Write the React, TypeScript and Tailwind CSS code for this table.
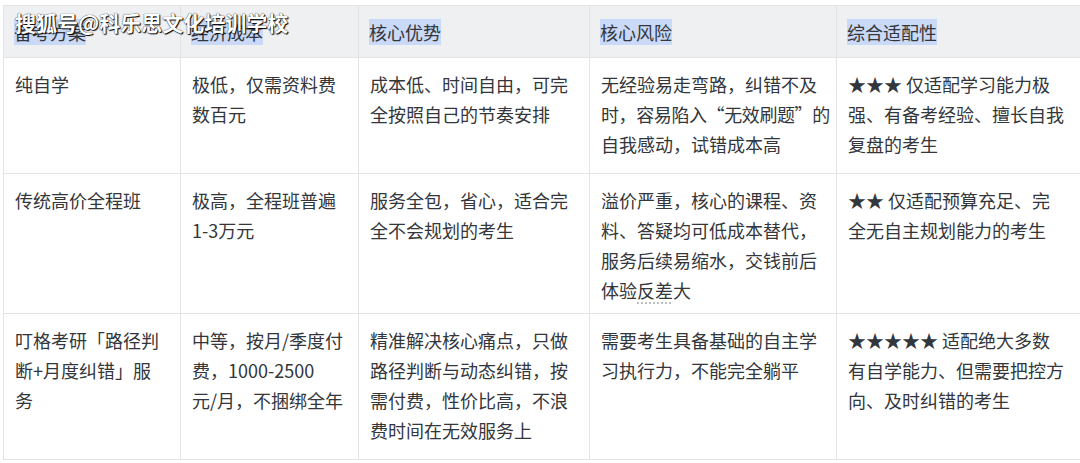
import React from "react"

type Cell = React.ReactNode[]

const headers = ["备考方案", "经济成本", "核心优势", "核心风险", "综合适配性"]

const rows: Cell[][] = [
  [
    ["纯自学"],
    ["极低，仅需资料费", "数百元"],
    ["成本低、时间自由，可完", "全按照自己的节奏安排"],
    ["无经验易走弯路，纠错不及", <span className="tracking-[-0.4px]">时，容易陷入“无效刷题”的</span>, "自我感动，试错成本高"],
    ["★★★ 仅适配学习能力极", "强、有备考经验、擅长自我", "复盘的考生"],
  ],
  [
    ["传统高价全程班"],
    ["极高，全程班普遍", "1-3万元"],
    ["服务全包，省心，适合完", "全不会规划的考生"],
    [
      "溢价严重，核心的课程、资",
      "料、答疑均可低成本替代，",
      "服务后续易缩水，交钱前后",
      <>
        体验
        <span className="underline decoration-dotted decoration-[#b5b8bd] underline-offset-[5px]">反差</span>
        大
      </>,
    ],
    ["★★ 仅适配预算充足、完", "全无自主规划能力的考生"],
  ],
  [
    ["叮格考研「路径判", "断+月度纠错」服", "务"],
    ["中等，按月/季度付", "费，1000-2500", "元/月，不捆绑全年"],
    ["精准解决核心痛点，只做", "路径判断与动态纠错，按", "需付费，性价比高，不浪", "费时间在无效服务上"],
    ["需要考生具备基础的自主学", "习执行力，不能完全躺平"],
    ["★★★★★ 适配绝大多数", "有自学能力、但需要把控方", "向、及时纠错的考生"],
  ],
]

const rowHeights = ["h-[116px]", "h-[140px]", "h-[146px]"]

export default function App() {
  return (
    <div
      className="relative w-[1080px] h-[463px] overflow-hidden bg-white text-[18px] text-[#33363b]"
      style={{ fontFamily: '"Noto Sans CJK SC", "Noto Sans", sans-serif' }}
    >
      <div className="pt-[5px] pl-[3px]">
        <div className="grid w-[1090px] grid-cols-[177px_178px_231px_247px_257px] border-l border-t border-[#e3e4e6]">
          {headers.map((h) => (
            <div
              key={h}
              className="h-[52px] flex items-center px-[10px] bg-[#eff0f2] border-r border-b border-[#e3e4e6]"
            >
              <span className="bg-[#c9d9f7] leading-[26px]">{h}</span>
            </div>
          ))}
          {rows.map((row, ri) =>
            row.map((cell, ci) => (
              <div
                key={`${ri}-${ci}`}
                className={`${rowHeights[ri]} px-[11px] pt-[11px] border-r border-b border-[#e3e4e6] leading-[30px] whitespace-nowrap`}
              >
                {cell.map((line, li) => (
                  <div key={li}>{line}</div>
                ))}
              </div>
            ))
          )}
        </div>
      </div>

      {/* watermark */}
      <div className="absolute left-[15px] top-[7px] text-[21px] font-bold leading-[30px] text-white [text-shadow:0_0_1px_#000,1px_1px_1px_#000]">
        搜狐号@科乐思文化培训学校
      </div>
    </div>
  )
}
